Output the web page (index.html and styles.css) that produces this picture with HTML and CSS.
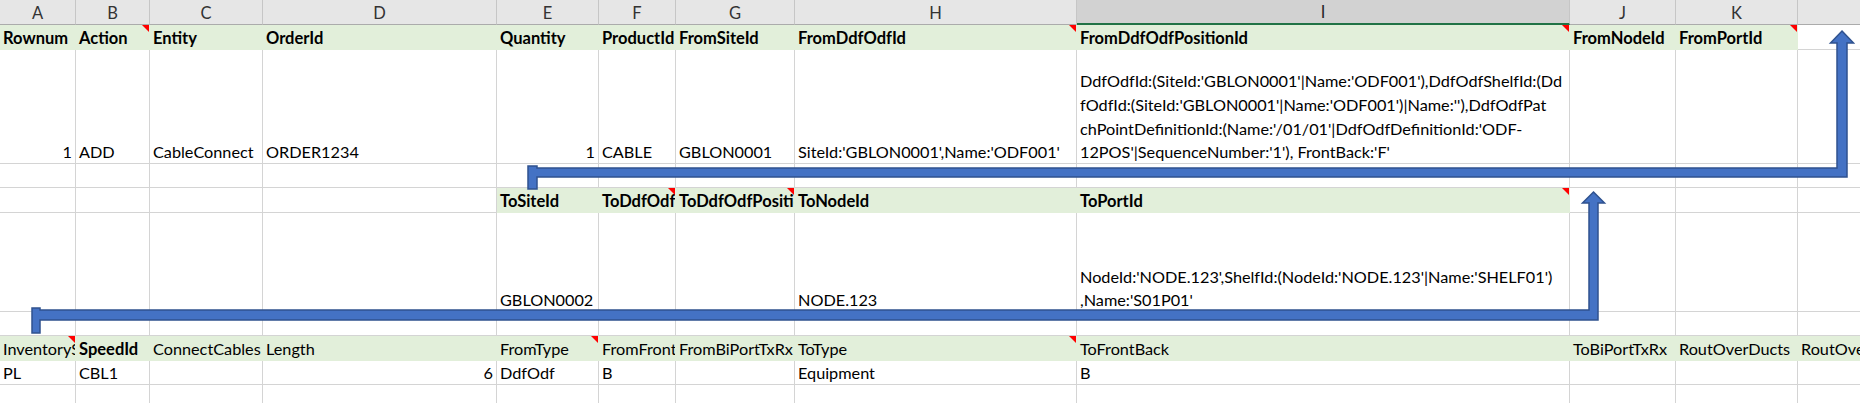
FILE: index.html
```html
<!DOCTYPE html>
<html>
<head>
<meta charset="utf-8">
<link rel="stylesheet" href="styles.css">
</head>
<body>
<div class="sheet">
  <div class="grid">
    <div class="ch">A</div><div class="ch">B</div><div class="ch">C</div><div class="ch">D</div><div class="ch">E</div><div class="ch">F</div><div class="ch">G</div><div class="ch">H</div><div class="ch sel">I</div><div class="ch">J</div><div class="ch">K</div><div class="ch">L</div>

    <div class="c g b">Rownum</div>
    <div class="c g b note">Action</div>
    <div class="c g b">Entity</div>
    <div class="c g b">OrderId</div>
    <div class="c g b">Quantity</div>
    <div class="c g b">ProductId</div>
    <div class="c g b">FromSiteId</div>
    <div class="c g b note">FromDdfOdfId</div>
    <div class="c g b note">FromDdfOdfPositionId</div>
    <div class="c g b">FromNodeId</div>
    <div class="c g b note">FromPortId</div>
    <div class="c"></div>

    <div class="c r">1</div>
    <div class="c">ADD</div>
    <div class="c">CableConnect</div>
    <div class="c">ORDER1234</div>
    <div class="c r">1</div>
    <div class="c">CABLE</div>
    <div class="c">GBLON0001</div>
    <div class="c">SiteId:'GBLON0001',Name:'ODF001'</div>
    <div class="c"><span class="w">DdfOdfId:(SiteId:'GBLON0001'|Name:'ODF001'),DdfOdfShelfId:(Dd<br>fOdfId:(SiteId:'GBLON0001'|Name:'ODF001')|Name:''),DdfOdfPat<br>chPointDefinitionId:(Name:'/01/01'|DdfOdfDefinitionId:'ODF-<br>12POS'|SequenceNumber:'1'), FrontBack:'F'</span></div>
    <div class="c"></div>
    <div class="c"></div>
    <div class="c"></div>

    <div class="c"></div><div class="c"></div><div class="c"></div><div class="c"></div><div class="c"></div><div class="c"></div><div class="c"></div><div class="c"></div><div class="c"></div><div class="c"></div><div class="c"></div><div class="c"></div>

    <div class="c"></div>
    <div class="c"></div>
    <div class="c"></div>
    <div class="c"></div>
    <div class="c g b">ToSiteId</div>
    <div class="c g b note">ToDdfOdfId</div>
    <div class="c g b note">ToDdfOdfPositionId</div>
    <div class="c g b">ToNodeId</div>
    <div class="c g b note">ToPortId</div>
    <div class="c"></div>
    <div class="c"></div>
    <div class="c"></div>

    <div class="c"></div>
    <div class="c"></div>
    <div class="c"></div>
    <div class="c"></div>
    <div class="c">GBLON0002</div>
    <div class="c"></div>
    <div class="c"></div>
    <div class="c">NODE.123</div>
    <div class="c"><span class="w">NodeId:'NODE.123',ShelfId:(NodeId:'NODE.123'|Name:'SHELF01')<br>,Name:'S01P01'</span></div>
    <div class="c"></div>
    <div class="c"></div>
    <div class="c"></div>

    <div class="c"></div><div class="c"></div><div class="c"></div><div class="c"></div><div class="c"></div><div class="c"></div><div class="c"></div><div class="c"></div><div class="c"></div><div class="c"></div><div class="c"></div><div class="c"></div>

    <div class="c g note">InventorySystem</div>
    <div class="c g b">SpeedId</div>
    <div class="c g">ConnectCables</div>
    <div class="c g">Length</div>
    <div class="c g note">FromType</div>
    <div class="c g">FromFrontBack</div>
    <div class="c g">FromBiPortTxRx</div>
    <div class="c g note">ToType</div>
    <div class="c g">ToFrontBack</div>
    <div class="c g">ToBiPortTxRx</div>
    <div class="c g">RoutOverDucts</div>
    <div class="c g">RoutOverSubducts</div>

    <div class="c">PL</div>
    <div class="c">CBL1</div>
    <div class="c"></div>
    <div class="c r">6</div>
    <div class="c">DdfOdf</div>
    <div class="c">B</div>
    <div class="c"></div>
    <div class="c">Equipment</div>
    <div class="c">B</div>
    <div class="c"></div>
    <div class="c"></div>
    <div class="c"></div>

    <div class="c"></div><div class="c"></div><div class="c"></div><div class="c"></div><div class="c"></div><div class="c"></div><div class="c"></div><div class="c"></div><div class="c"></div><div class="c"></div><div class="c"></div><div class="c"></div>
  </div>

  <svg class="arrows" width="1860" height="403" viewBox="0 0 1860 403">
    <polygon points="1842,31 1853.5,43 1847,43 1847,177 537,177 537,189 528,189 528,166 537,166 537,168 1837,168 1837,43 1830.5,43"/>
    <polygon points="1593.5,192 1604.5,203 1598,203 1598,320 40,320 40,333 32,333 32,308 40,308 40,310 1589,310 1589,203 1582.5,203"/>
  </svg>
</div>
</body>
</html>
```

FILE: styles.css
```css
* {
  box-sizing: border-box;
  margin: 0;
  padding: 0;
}

html, body {
  width: 1860px;
  height: 403px;
  overflow: hidden;
  background: #ffffff;
}

body {
  font-family: Lato, "Liberation Sans", sans-serif;
  font-size: 16.25px;
  color: #000000;
}

.sheet {
  position: relative;
  width: 1860px;
  height: 403px;
  overflow: hidden;
}

.grid {
  display: grid;
  width: 1948px;
  grid-template-columns: 76px 74px 113px 234px 102px 77px 119px 282px 493px 106px 122px 150px;
  grid-template-rows: 25px 25px 114px 24px 25px 99px 24px 25px 24px 24px;
}

.ch {
  display: flex;
  align-items: center;
  justify-content: center;
  background: #e6e6e6;
  border-right: 1px solid #c6c6c6;
  border-bottom: 1px solid #ababab;
  color: #333333;
  font-size: 16.5px;
  padding-top: 1px;
}

.ch.sel {
  background: #d2d2d2;
  border-bottom: 2px solid #217346;
  color: #262626;
}

.c {
  position: relative;
  display: flex;
  align-items: flex-end;
  padding: 0 3px;
  line-height: 22px;
  white-space: nowrap;
  overflow: hidden;
  border-right: 1px solid #d4d4d4;
  border-bottom: 1px solid #d4d4d4;
}

.g {
  background: #e2efda;
  border-color: #e2efda;
}

.b {
  font-weight: 700;
  font-size: 16.5px;
}

.r {
  justify-content: flex-end;
}

.w {
  display: block;
  line-height: 23.7px;
  margin-bottom: -1px;
}

.note::after {
  content: "";
  position: absolute;
  top: 0;
  right: 0;
  border-top: 7px solid #ff0000;
  border-left: 7px solid transparent;
}

.arrows {
  position: absolute;
  left: 0;
  top: 0;
  pointer-events: none;
}

.arrows polygon {
  fill: #4472c4;
  stroke: #2f528f;
  stroke-width: 1.5;
  stroke-linejoin: miter;
}
```
